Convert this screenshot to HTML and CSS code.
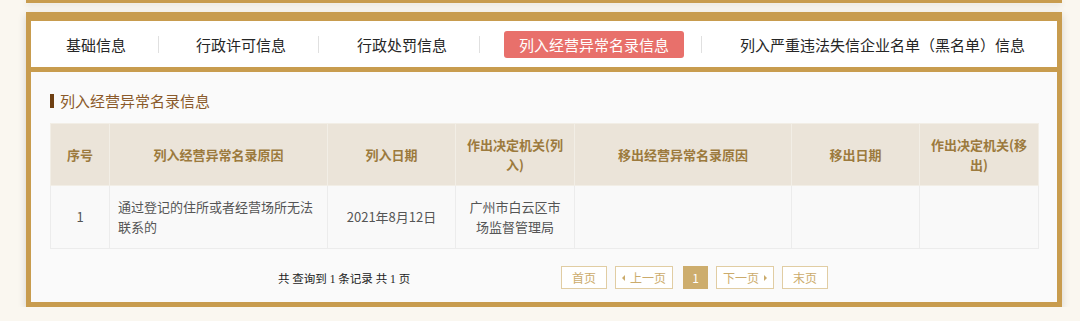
FILE: index.html
```html
<!DOCTYPE html>
<html lang="zh-CN">
  <head>
    <meta charset="utf-8" />
    <meta name="viewport" content="width=device-width, initial-scale=1.0" />
    <title>列入经营异常名录信息</title>
    <link rel="stylesheet" href="styles.css">
  </head>
  <body>
    <div class="prev-card"></div>

    <div class="card">
      <div class="tabs">
        <span class="tab tab-first">基础信息</span>
        <span class="sep"></span>
        <span class="tab">行政许可信息</span>
        <span class="sep"></span>
        <span class="tab tab-third">行政处罚信息</span>
        <span class="sep"></span>
        <span class="tab active">列入经营异常名录信息</span>
        <span class="sep"></span>
        <span class="tab tab-last">列入严重违法失信企业名单（黑名单）信息</span>
      </div>

      <div class="content">
        <h3 class="title"><span class="bar"></span>列入经营异常名录信息</h3>

        <table class="records">
          <colgroup>
            <col style="width: 59px">
            <col style="width: 218px">
            <col style="width: 128px">
            <col style="width: 119px">
            <col style="width: 217px">
            <col style="width: 128px">
            <col style="width: 119px">
          </colgroup>
          <tr>
            <th>序号</th>
            <th>列入经营异常名录原因</th>
            <th>列入日期</th>
            <th>作出决定机关(列入)</th>
            <th>移出经营异常名录原因</th>
            <th>移出日期</th>
            <th>作出决定机关(移出)</th>
          </tr>
          <tr>
            <td>1</td>
            <td class="left">通过登记的住所或者经营场所无法联系的</td>
            <td>2021年8月12日</td>
            <td>广州市白云区市场监督管理局</td>
            <td></td>
            <td></td>
            <td></td>
          </tr>
        </table>

        <div class="footer">
          <span class="info">共 查询到 1 条记录 共 1 页</span>
          <div class="pager">
            <span class="btn">首页</span>
            <span class="btn btn-arrow"><i class="arrow-left"></i>上一页</span>
            <span class="btn current">1</span>
            <span class="btn btn-arrow">下一页<i class="arrow-right"></i></span>
            <span class="btn">末页</span>
          </div>
        </div>
      </div>
    </div>
  </body>
</html>
```

FILE: styles.css
```css
body {
    margin: 0;
    background: #faf7f0;
    font-family: "Noto Sans CJK SC", "Noto Sans", sans-serif;
    color: #333;
}

.prev-card {
    height: 3px;
    margin: 0 18px 0 26px;
    background: #c89c4e;
    box-shadow: 0 2px 6px rgba(0, 0, 0, 0.12);
}

.card {
    margin: 9px 18px 0 26px;
    border: 5px solid #c89c4e;
    border-top-width: 9px;
    background: #c89c4e;
    box-shadow: 0 3px 8px rgba(0, 0, 0, 0.15);
}

/* tab bar */

.tabs {
    display: flex;
    align-items: center;
    height: 46px;
    margin-bottom: 5px;
    background: #fff;
}

.tab {
    flex-shrink: 0;
    margin: 0 17px 0 22px;
    padding: 0 15px;
    font-size: 15px;
    line-height: 27px;
    color: #262626;
    white-space: nowrap;
}

.tab-first {
    margin-left: 20px;
}

.tab-third {
    margin-left: 23px;
}

.tab.active {
    margin-left: 24px;
    background: #e8706b;
    color: #fff;
    border-radius: 3px;
}

.tab-last {
    margin-left: 23px;
}

.sep {
    flex-shrink: 0;
    width: 1px;
    height: 17px;
    background: #e0e0e0;
}

/* content */

.content {
    background: #fafafa;
    padding: 19px 19px 13px;
}

.title {
    display: flex;
    align-items: center;
    margin: 0 0 12px;
    font-size: 15px;
    font-weight: normal;
    line-height: 20px;
    color: #8b5a2b;
}

.bar {
    display: inline-block;
    width: 4px;
    height: 14px;
    margin-right: 6px;
    background: #6e3f12;
}

.records {
    width: 100%;
    table-layout: fixed;
    border-collapse: collapse;
    font-size: 13px;
}

.records th {
    height: 61px;
    padding: 0 8px;
    background: #ebe4d9;
    border: 1px solid #f2eee6;
    color: #9c7a3d;
    font-weight: bold;
    line-height: 20px;
}

.records td {
    height: 62px;
    padding: 0 8px;
    background: #f9f9f9;
    border: 1px solid #ececec;
    color: #555;
    text-align: center;
    line-height: 20px;
}

.records td.left {
    text-align: left;
}

/* footer and pager */

.footer {
    display: flex;
    align-items: center;
    margin-top: 17px;
}

.info {
    margin-left: 228px;
    font-family: "Liberation Serif", "Noto Sans CJK SC", serif;
    font-size: 11.5px;
    color: #222;
}

.pager {
    display: flex;
    gap: 8px;
    margin-left: auto;
    margin-right: 210px;
}

.btn {
    display: inline-flex;
    align-items: center;
    justify-content: center;
    height: 21px;
    padding: 0 10px;
    border: 1px solid #e1cda3;
    font-size: 12px;
    color: #cbab6c;
    background: #fff;
}

.btn-arrow {
    padding: 0 6px;
}

.btn.current {
    width: 23px;
    padding: 0;
    margin-left: 2px;
    border-color: #cdad6d;
    background: #cdad6d;
    color: #fff;
}

.arrow-left,
.arrow-right {
    display: inline-block;
    width: 0;
    height: 0;
    border-top: 3px solid transparent;
    border-bottom: 3px solid transparent;
}

.arrow-left {
    border-right: 3px solid #cbab6c;
    margin-right: 5px;
}

.arrow-right {
    border-left: 3px solid #cbab6c;
    margin-left: 5px;
}
```
